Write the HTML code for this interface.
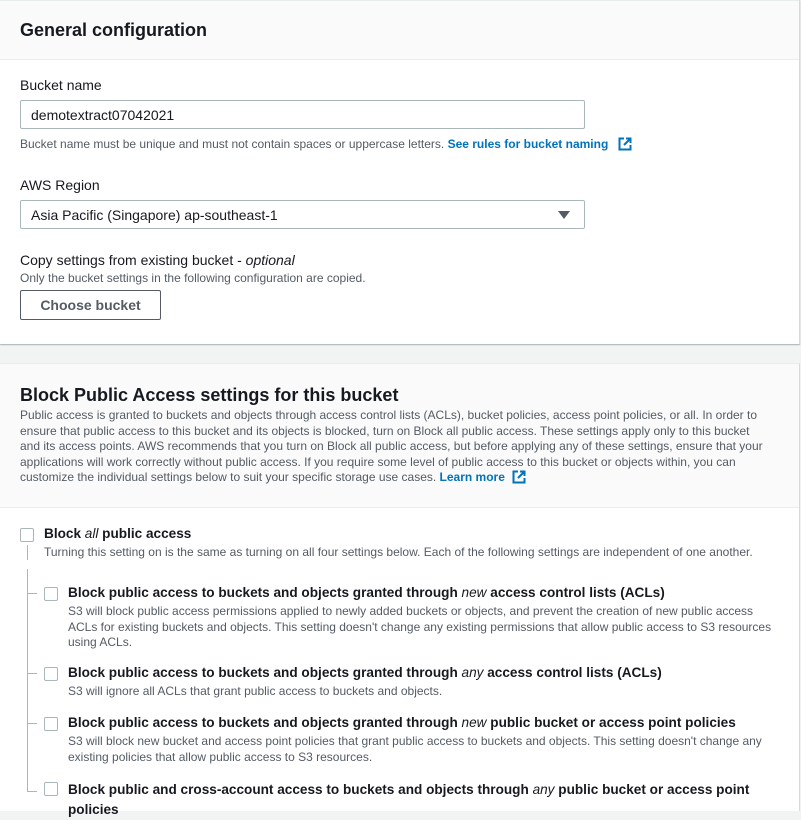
<!DOCTYPE html>
<html><head><meta charset="utf-8"><style>
*{box-sizing:border-box;margin:0;padding:0}
body{width:801px;height:811px;overflow:hidden;background:#f2f3f3;font-family:"Liberation Sans",Arial,sans-serif;color:#16191f;position:relative}
.a{position:absolute;white-space:nowrap}
.card{position:absolute;left:0;width:800px;background:#fff;border-right:1px solid #d5dbdb}
.h{background:#fafafa;border-bottom:1px solid #eaeded}
.lbl{font-size:14px;color:#16191f}
.small{font-size:12px;color:#545b64}
.inp{position:absolute;left:20px;width:565px;height:29px;border:1px solid #aab7b8;border-radius:2px;font-size:14px;padding:6px 10px}
.link{color:#0073bb;font-weight:bold}
.cb{position:absolute;width:14px;height:14px;border:1px solid #aab7b8;border-radius:2px;background:#fff}
.t{font-size:13.6px;font-weight:bold}
.line{position:absolute;background:#aab7b8}
</style></head><body>
<div class="card" style="top:0;height:344px;box-shadow:0 1px 1px rgba(0,28,36,.3)">
 <div class="h" style="height:60px;border-top:1px solid #eaeded"></div>
 <div class="a" style="left:20px;top:20px;font-size:18px;font-weight:bold">General configuration</div>
 <div class="a lbl" style="left:20px;top:77px">Bucket name</div>
 <div class="inp" style="top:100px">demotextract07042021</div>
 <div class="a small" style="left:20px;top:137px">Bucket name must be unique and must not contain spaces or uppercase letters. <span class="link">See rules for bucket naming</span>
  <svg width="14" height="14" viewBox="0 0 14 14" style="vertical-align:-3px;margin-left:6px"><path d="M6 1.5H1.5v11h11V8" fill="none" stroke="#0073bb" stroke-width="2"/><path d="M8 1.5h4.5V6M12.5 1.5L6 8" fill="none" stroke="#0073bb" stroke-width="2"/></svg></div>
 <div class="a lbl" style="left:20px;top:177px">AWS Region</div>
 <div class="inp" style="top:200px">Asia Pacific (Singapore) ap-southeast-1
  <svg width="12" height="8" style="position:absolute;right:14px;top:10px"><path d="M0 0h12L6 8z" fill="#545b64"/></svg></div>
 <div class="a lbl" style="left:20px;top:252px">Copy settings from existing bucket - <i>optional</i></div>
 <div class="a small" style="left:20px;top:271px">Only the bucket settings in the following configuration are copied.</div>
 <div class="a" style="left:20px;top:290px;width:141px;height:30px;border:1px solid #545b64;border-radius:2px;font-size:14px;font-weight:bold;color:#545b64;text-align:center;line-height:28px">Choose bucket</div>
</div>
<div class="card" style="top:363px;height:448px;border-top:1px solid #eaeded">
 <div class="h" style="height:144px"></div>
 <div class="a" style="left:20px;top:21px;font-size:18px;font-weight:bold">Block Public Access settings for this bucket</div>
 <div class="a small" style="left:20px;top:44px;line-height:15.6px">Public access is granted to buckets and objects through access control lists (ACLs), bucket policies, access point policies, or all. In order to<br>ensure that public access to this bucket and its objects is blocked, turn on Block all public access. These settings apply only to this bucket<br>and its access points. AWS recommends that you turn on Block all public access, but before applying any of these settings, ensure that your<br>applications will work correctly without public access. If you require some level of public access to this bucket or objects within, you can<br>customize the individual settings below to suit your specific storage use cases. <span class="link">Learn more</span>
  <svg width="14" height="14" viewBox="0 0 14 14" style="vertical-align:-3px;margin-left:4px"><path d="M6 1.5H1.5v11h11V8" fill="none" stroke="#0073bb" stroke-width="2"/><path d="M8 1.5h4.5V6M12.5 1.5L6 8" fill="none" stroke="#0073bb" stroke-width="2"/></svg></div>
 <div class="cb" style="left:20px;top:164px"></div>
 <div class="a t" style="left:44px;top:162px">Block <i style="font-weight:normal">all</i> public access</div>
 <div class="a small" style="left:44px;top:181px">Turning this setting on is the same as turning on all four settings below. Each of the following settings are independent of one another.</div>
 <div class="line" style="left:27px;top:181px;width:1px;height:15px"></div>
 <div class="line" style="left:27px;top:205px;width:1px;height:223px"></div>
 <div class="line" style="left:27px;top:229px;width:10px;height:1px"></div>
 <div class="line" style="left:27px;top:309px;width:10px;height:1px"></div>
 <div class="line" style="left:27px;top:359px;width:10px;height:1px"></div>
 <div class="line" style="left:27px;top:427px;width:10px;height:1px"></div>
 <div class="cb" style="left:44px;top:223px"></div>
 <div class="a t" style="left:68px;top:221px">Block public access to buckets and objects granted through <i style="font-weight:normal">new</i> access control lists (ACLs)</div>
 <div class="a small" style="left:68px;top:240px;line-height:15.6px">S3 will block public access permissions applied to newly added buckets or objects, and prevent the creation of new public access<br>ACLs for existing buckets and objects. This setting doesn't change any existing permissions that allow public access to S3 resources<br>using ACLs.</div>
 <div class="cb" style="left:44px;top:303px"></div>
 <div class="a t" style="left:68px;top:301px">Block public access to buckets and objects granted through <i style="font-weight:normal">any</i> access control lists (ACLs)</div>
 <div class="a small" style="left:68px;top:320px">S3 will ignore all ACLs that grant public access to buckets and objects.</div>
 <div class="cb" style="left:44px;top:353px"></div>
 <div class="a t" style="left:68px;top:351px">Block public access to buckets and objects granted through <i style="font-weight:normal">new</i> public bucket or access point policies</div>
 <div class="a small" style="left:68px;top:370px;line-height:15.6px">S3 will block new bucket and access point policies that grant public access to buckets and objects. This setting doesn't change any<br>existing policies that allow public access to S3 resources.</div>
 <div class="cb" style="left:44px;top:418px"></div>
 <div class="a t" style="left:68px;top:416px;line-height:20px">Block public and cross-account access to buckets and objects through <i style="font-weight:normal">any</i> public bucket or access point<br>policies</div>
</div>
</body></html>
